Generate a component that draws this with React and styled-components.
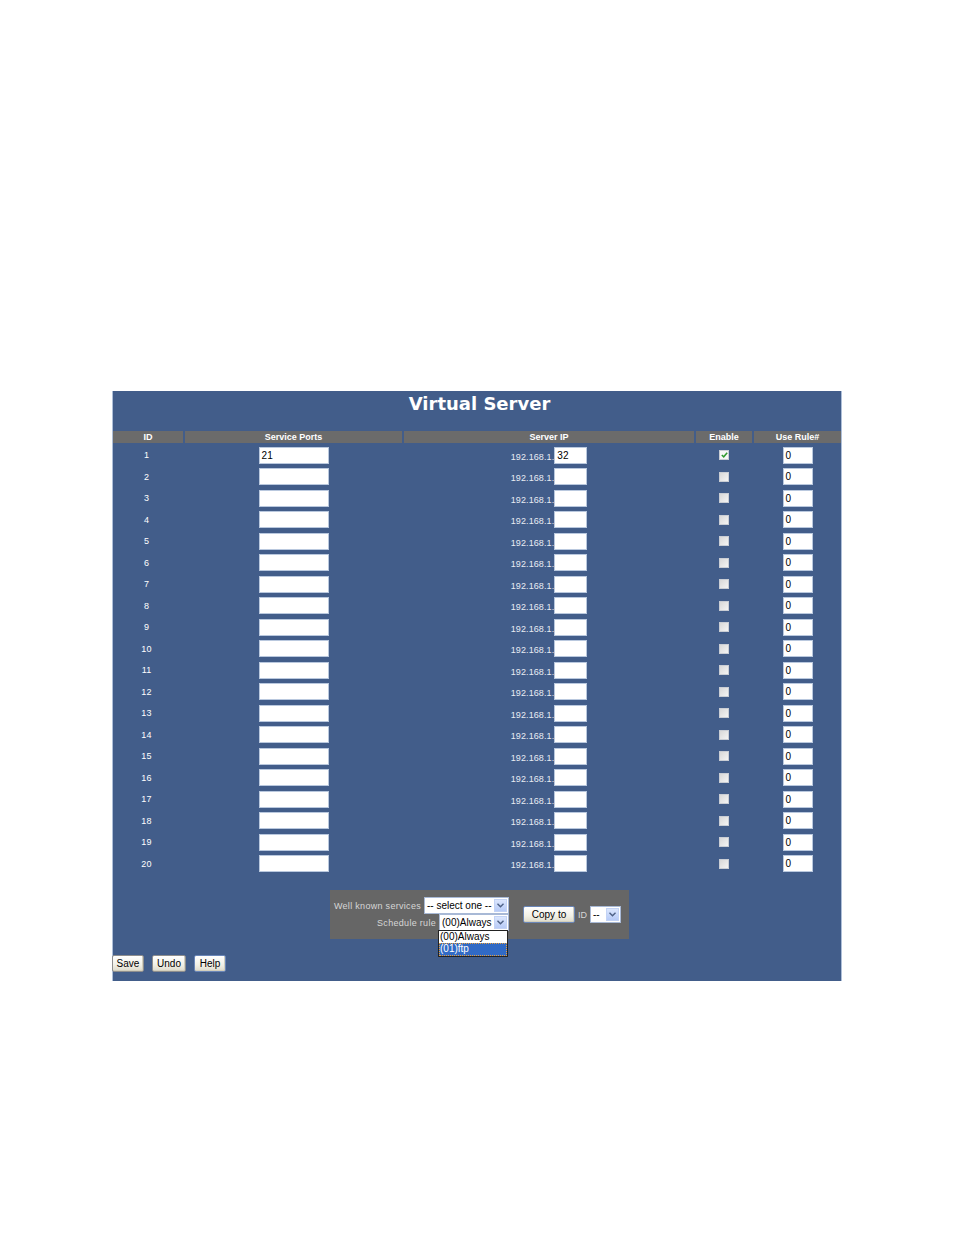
import React from "react";
import styled, { createGlobalStyle } from "styled-components";

const GlobalStyle = createGlobalStyle`
  html, body { margin: 0; padding: 0; background: #ffffff; }
  body { font-family: "Liberation Sans", Arial, sans-serif; }
`;

const Page = styled.div`
  padding: 391px 0 0 112px;
  width: 954px;
  height: 1235px;
  box-sizing: border-box;
`;

const Panel = styled.div`
  width: 730px;
  height: 590px;
  box-sizing: border-box;
  background: #425d8a;
  border-left: 1px solid #aebfd8;
  border-right: 1px solid #aebfd8;
  position: relative;
`;

const TitleBar = styled.div`
  height: 40px;
  display: flex;
  align-items: flex-start;
  justify-content: center;
  padding-left: 5px;
  padding-top: 2px;
  box-sizing: border-box;
  font-family: "DejaVu Sans", Verdana, sans-serif;
  font-weight: bold;
  font-size: 18px;
  line-height: 22px;
  color: #ffffff;
`;

const COLS = "70px 217px 290px 56px 87px";

const HeaderRow = styled.div`
  display: grid;
  grid-template-columns: ${COLS};
  column-gap: 2px;
  height: 12px;
  margin-bottom: 1.5px;
`;

const HeaderCell = styled.div`
  background: #6b6b6b;
  color: #ffffff;
  font-weight: bold;
  font-size: 9px;
  line-height: 12px;
  text-align: center;
`;

const Row = styled.div`
  display: grid;
  grid-template-columns: ${COLS};
  column-gap: 2px;
  height: 21.5px;
  align-items: center;
`;

const Cell = styled.div`
  display: flex;
  align-items: center;
  justify-content: center;
  color: #ffffff;
  font-size: 9px;
  letter-spacing: 0.2px;
`;

const IdCell = styled(Cell)`
  padding-right: 3px;
`;

const IpText = styled.span`
  color: #e8ecf3;
  font-size: 9px;
  letter-spacing: 0.1px;
  padding-top: 3px;
`;

const TextInput = styled.div`
  width: ${(p) => p.$w}px;
  height: 17px;
  box-sizing: border-box;
  background: #ffffff;
  border: 1px solid #b9c8de;
  font-size: 10px;
  line-height: 15px;
  padding-left: 2px;
  color: #000;
`;

const Check = styled.span`
  width: 10px;
  height: 10px;
  box-sizing: border-box;
  border: 1px solid #c9cdd4;
  background: linear-gradient(135deg, #d8d8d8 0%, #f4f4f4 100%);
  display: flex;
  align-items: center;
  justify-content: center;
  ${(p) => p.$on && "background: #f7f7f7;"}
`;

const BottomArea = styled.div`
  display: flex;
  justify-content: center;
  padding-left: 5px;
  margin-top: 15px;
`;

const ControlBox = styled.div`
  width: 299px;
  height: 49px;
  box-sizing: border-box;
  background: #666666;
  display: flex;
  align-items: center;
  justify-content: flex-end;
  padding: 0 8px 1px 0;
`;

const LeftCol = styled.div`
  display: flex;
  flex-direction: column;
  align-items: flex-end;
  flex-shrink: 0;
`;

const FieldRow = styled.div`
  display: flex;
  align-items: center;
  gap: 3px;
  position: relative;
`;

const Label = styled.span`
  font-size: 9px;
  letter-spacing: 0.3px;
  white-space: nowrap;
  color: #d6d6d6;
  padding-top: 2px;
`;

const RightCol = styled.div`
  display: flex;
  align-items: center;
  flex-shrink: 0;
  margin-left: 14px;
  margin-top: 1px;
`;

const SelectBox = styled.div`
  width: ${(p) => p.$w}px;
  height: 17px;
  flex-shrink: 0;
  box-sizing: border-box;
  background: #ffffff;
  border: 1px solid #a8b9d6;
  display: flex;
  align-items: stretch;
  position: relative;
`;

const SelectText = styled.span`
  flex: 1;
  font-size: 10px;
  line-height: 15px;
  padding-left: 2px;
  color: #000;
  white-space: nowrap;
  overflow: hidden;
`;

const ArrowBtn = styled.span`
  width: 13px;
  margin: 1px;
  box-sizing: border-box;
  background: linear-gradient(180deg, #dbe6fd 0%, #b7cbf7 100%);
  border: 1px solid #c3d3f5;
  display: flex;
  align-items: center;
  justify-content: center;
`;

const DropList = styled.div`
  position: absolute;
  top: 100%;
  right: 0;
  width: 70px;
  box-sizing: border-box;
  background: #ffffff;
  border: 1px solid #222;
  z-index: 5;
`;

const DropItem = styled.div`
  height: 12.5px;
  font-size: 10px;
  line-height: 12px;
  padding-left: 1px;
  color: ${(p) => (p.$sel ? "#ffffff" : "#000")};
  background: ${(p) => (p.$sel ? "#316ac5" : "#ffffff")};
  outline: ${(p) => (p.$sel ? "1px dotted #e8a040" : "none")};
  outline-offset: -1px;
`;

const XpButton = styled.div`
  height: 17px;
  width: ${(p) => p.$w}px;
  flex-shrink: 0;
  box-sizing: border-box;
  border: 1px solid ${(p) => (p.$focus ? "#6a86b8" : "#8e8e8e")};
  border-radius: 2px;
  background: linear-gradient(180deg, #ffffff 0%, #f1f0e6 60%, #dedbcc 100%);
  font-size: 10px;
  line-height: 15px;
  text-align: center;
  color: #000;
  box-shadow: inset -1px -1px 0 #d3cfbd;
`;

const IdLabel = styled.span`
  font-size: 9px;
  color: #d6d6d6;
  margin: 2px 3px 0 3px;
`;

const ButtonRow = styled.div`
  display: flex;
  gap: 8px;
  margin-top: 16px;
  margin-left: -1px;
`;

function Arrow() {
  return (
    <ArrowBtn>
      <svg width="7" height="5" viewBox="0 0 7 5">
        <path d="M0.5 0.8 L3.5 3.8 L6.5 0.8" fill="none" stroke="#4d6185" strokeWidth="1.4" />
      </svg>
    </ArrowBtn>
  );
}

function Select({ w, text, children }) {
  return (
    <SelectBox $w={w}>
      <SelectText>{text}</SelectText>
      <Arrow />
      {children}
    </SelectBox>
  );
}

const rows = Array.from({ length: 20 }, (_, i) => ({
  id: i + 1,
  port: i === 0 ? "21" : "",
  ip: i === 0 ? "32" : "",
  on: i === 0,
}));

export default function App() {
  return (
    <>
      <GlobalStyle />
      <Page>
        <Panel>
          <TitleBar>Virtual Server</TitleBar>
          <HeaderRow>
            <HeaderCell>ID</HeaderCell>
            <HeaderCell>Service Ports</HeaderCell>
            <HeaderCell>Server IP</HeaderCell>
            <HeaderCell>Enable</HeaderCell>
            <HeaderCell>Use Rule#</HeaderCell>
          </HeaderRow>
          {rows.map((r) => (
            <Row key={r.id}>
              <IdCell>{r.id}</IdCell>
              <Cell>
                <TextInput $w={70}>{r.port}</TextInput>
              </Cell>
              <Cell>
                <IpText>192.168.1.</IpText>
                <TextInput $w={33}>{r.ip}</TextInput>
              </Cell>
              <Cell>
                <Check $on={r.on}>
                  {r.on && (
                    <svg width="7" height="6" viewBox="0 0 7 6">
                      <path d="M0.8 3 L2.7 4.8 L6.2 0.8" fill="none" stroke="#2f9a2f" strokeWidth="1.5" />
                    </svg>
                  )}
                </Check>
              </Cell>
              <Cell>
                <TextInput $w={30}>0</TextInput>
              </Cell>
            </Row>
          ))}
          <BottomArea>
            <ControlBox>
              <LeftCol>
                <FieldRow>
                  <Label>Well known services</Label>
                  <Select w={85} text="-- select one --" />
                </FieldRow>
                <FieldRow>
                  <Label>Schedule rule</Label>
                  <Select w={70} text="(00)Always">
                    <DropList>
                      <DropItem>(00)Always</DropItem>
                      <DropItem $sel>(01)ftp</DropItem>
                    </DropList>
                  </Select>
                </FieldRow>
              </LeftCol>
              <RightCol>
                <XpButton $w={52} $focus>Copy to</XpButton>
                <IdLabel>ID</IdLabel>
                <Select w={31} text="--" />
              </RightCol>
            </ControlBox>
          </BottomArea>
          <ButtonRow>
            <XpButton $w={32}>Save</XpButton>
            <XpButton $w={34}>Undo</XpButton>
            <XpButton $w={32} $focus>Help</XpButton>
          </ButtonRow>
        </Panel>
      </Page>
    </>
  );
}
